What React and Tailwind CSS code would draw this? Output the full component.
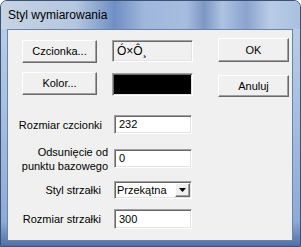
const font = { fontFamily: '"Liberation Sans", Arial, sans-serif' }

function Raised({ className = '', children }) {
  return (
    <div
      className={`flex items-center justify-center border border-t-white border-l-white border-r-[#696969] border-b-[#696969] bg-[#f0f0f0] text-[11px] text-black shadow-[inset_-1px_-1px_0_#a0a0a0] ${className}`}
    >
      {children}
    </div>
  )
}

function Sunken({ className = '', children }) {
  return (
    <div
      className={`flex items-center border border-t-[#a0a0a0] border-l-[#a0a0a0] border-r-white border-b-white shadow-[inset_1px_1px_0_#696969,inset_-1px_-1px_0_#e3e3e3] text-[11px] text-black ${className}`}
    >
      {children}
    </div>
  )
}

function Row({ label, className = '', labelClass = '', children }) {
  return (
    <div className={`flex items-center ${className}`}>
      <div className={`text-right text-[11px] leading-[14px] text-black ${labelClass}`}>{label}</div>
      {children}
    </div>
  )
}

export default function App() {
  return (
    <div
      style={font}
      className="flex h-[247px] w-[301px] flex-col overflow-hidden rounded-t-[7px] border border-[#3d5172] bg-[linear-gradient(180deg,#bcd0e8_0%,#a9c2e2_40%,#8eaad6_90%,#4f70a8_100%)]"
    >
      {/* Title bar */}
      <div className="flex h-[28px] items-center bg-[linear-gradient(90deg,#c6d3e3_0%,#b4c7e0_25%,#6f8fc4_38%,#9fb7dc_48%,#a6bddf_62%,#7d97c5_68%,#aec3e2_74%,#8aa3cf_82%,#b9cce6_90%,#a9c0e1_100%)] pl-[7px]">
        <span className="text-[12px] text-black">Styl wymiarowania</span>
      </div>

      {/* Client area */}
      <div className="ml-[6px] h-[212px] w-[286px] border border-[#6d83a6] bg-[#f0f0f0]">
        <div className="flex">
          <div className="ml-[14px] mt-[10px] flex flex-col gap-[9px]">
            <div className="flex gap-[15px]">
              <Raised className="h-[23px] w-[75px]">Czcionka...</Raised>
              <Sunken className="h-[22px] w-[81px] bg-[#f0f0f0] pl-[4px] text-[12px]">Ó×Ô¸</Sunken>
            </div>
            <div className="flex items-start gap-[15px]">
              <Raised className="h-[23px] w-[75px]">Kolor...</Raised>
              <Sunken className="mt-[1px] h-[23px] w-[81px] bg-black" />
            </div>
          </div>
          <div className="ml-[25px] mt-[8px] flex flex-col gap-[13px]">
            <Raised className="h-[24px] w-[71px]">OK</Raised>
            <Raised className="h-[22px] w-[71px]">Anuluj</Raised>
          </div>
        </div>

        <div className="mt-[18px] flex flex-col">
          <Row label="Rozmiar czcionki" className="h-[19px]" labelClass="w-[94px]">
            <Sunken className="ml-[12px] h-[19px] w-[78px] bg-white pl-[4px]">232</Sunken>
          </Row>
          <Row
            label={<>Odsunięcie od<br />punktu bazowego</>}
            className="mt-[10px] h-[29px]"
            labelClass="w-[100px]"
          >
            <Sunken className="ml-[6px] h-[19px] w-[78px] bg-white pl-[4px]">0</Sunken>
          </Row>
          <Row label="Styl strzałki" className="mt-[8px] h-[18px]" labelClass="w-[93px]">
            <Sunken className="ml-[13px] h-[18px] w-[78px] justify-between bg-white pl-[2px] pr-[1px]">
              <span>Przekątna</span>
              <Raised className="h-[14px] w-[15px]">
                <svg width="7" height="4" viewBox="0 0 7 4">
                  <polygon points="0,0 7,0 3.5,4" fill="#000" />
                </svg>
              </Raised>
            </Sunken>
          </Row>
          <Row label="Rozmiar strzałki" className="mt-[10px] h-[20px]" labelClass="w-[93px]">
            <Sunken className="ml-[13px] h-[20px] w-[78px] bg-white pl-[4px]">300</Sunken>
          </Row>
        </div>
      </div>
    </div>
  )
}
